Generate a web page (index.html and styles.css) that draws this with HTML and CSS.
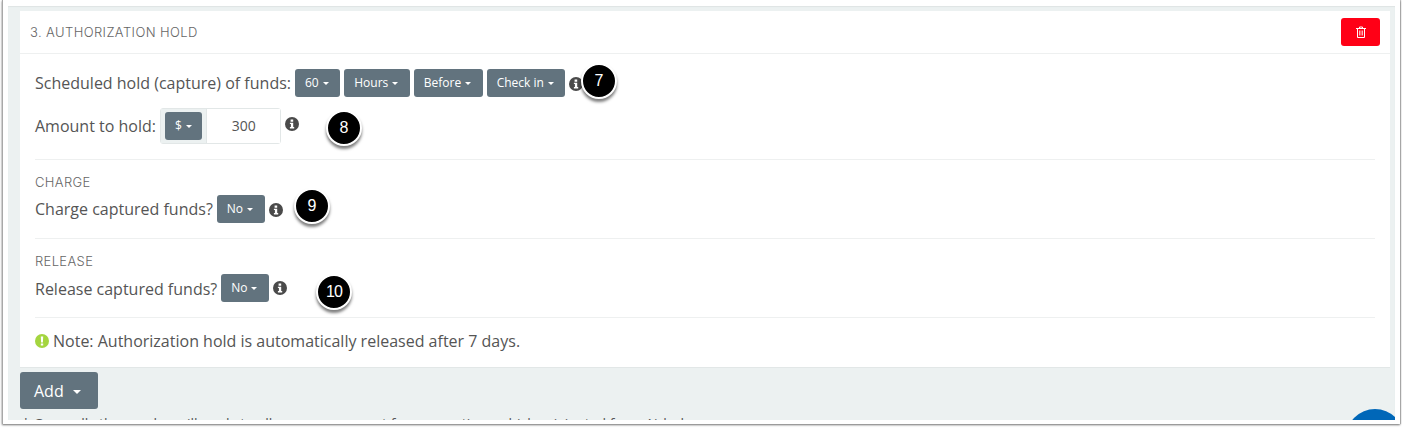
FILE: index.html
```html
<!DOCTYPE html>
<html lang="en">
  <head>
    <meta charset="UTF-8" />
    <meta name="viewport" content="width=device-width, initial-scale=1.0" />
    <title>Authorization hold</title>
    <link rel="stylesheet" href="styles.css">
  </head>
  <body>
    <div class="window">
      <div class="page">
        <div class="card">
          <div class="card-head">
            <span class="card-title">3. Authorization Hold</span>
            <button class="btn-delete" aria-label="Delete">
              <svg width="10" height="12" viewBox="0 0 10 12" fill="none" stroke="#fff" stroke-width="1">
                <path d="M0 2.5h10M3.5 2.5V1h3v1.5M1.5 2.5v9h7v-9" />
                <path d="M3.5 4.5v5M5 4.5v5M6.5 4.5v5" stroke-width="0.7" />
              </svg>
            </button>
          </div>
          <div class="card-body">
            <div class="row row-first">
              <span class="label">Scheduled hold (capture) of funds:</span>
              <button class="btn">60<i class="caret"></i></button>
              <button class="btn">Hours<i class="caret"></i></button>
              <button class="btn">Before<i class="caret"></i></button>
              <button class="btn">Check in<i class="caret"></i></button>
              <svg class="info info-low" viewBox="0 0 14 14"><circle cx="7" cy="7" r="7" fill="#4a4a4a" /><path d="M5.6 2.6h2.6v2.2H5.6zM4.9 5.7h3.3v4.4h1v1.4H4.9v-1.4h1V7.1h-1z" fill="#fff" /></svg>
            </div>
            <div class="row row-amount">
              <span class="label">Amount to hold:</span>
              <div class="input-group">
                <div class="addon">
                  <button class="btn">$<i class="caret"></i></button>
                </div>
                <span class="input">300</span>
              </div>
              <svg class="info info-high" viewBox="0 0 14 14"><circle cx="7" cy="7" r="7" fill="#4a4a4a" /><path d="M5.6 2.6h2.6v2.2H5.6zM4.9 5.7h3.3v4.4h1v1.4H4.9v-1.4h1V7.1h-1z" fill="#fff" /></svg>
            </div>
            <div class="section">
              <div class="section-title">Charge</div>
              <div class="row">
                <span class="label">Charge captured funds?</span>
                <button class="btn">No<i class="caret"></i></button>
                <svg class="info info-low" viewBox="0 0 14 14"><circle cx="7" cy="7" r="7" fill="#4a4a4a" /><path d="M5.6 2.6h2.6v2.2H5.6zM4.9 5.7h3.3v4.4h1v1.4H4.9v-1.4h1V7.1h-1z" fill="#fff" /></svg>
              </div>
            </div>
            <div class="section">
              <div class="section-title">Release</div>
              <div class="row">
                <span class="label label-low">Release captured funds?</span>
                <button class="btn">No<i class="caret"></i></button>
                <svg class="info" viewBox="0 0 14 14"><circle cx="7" cy="7" r="7" fill="#4a4a4a" /><path d="M5.6 2.6h2.6v2.2H5.6zM4.9 5.7h3.3v4.4h1v1.4H4.9v-1.4h1V7.1h-1z" fill="#fff" /></svg>
              </div>
            </div>
            <div class="note">
              <svg class="note-icon" viewBox="0 0 14 14"><circle cx="7" cy="7" r="7" fill="#a4d53f" /><path d="M5.8 2.4h2.4l-.3 6H6.100zM5.8 9.400h2.400v2.200H5.800z" fill="#fff" /></svg>
              <span>Note: Authorization hold is automatically released after 7 days.</span>
            </div>
          </div>
        </div>
        <button class="btn-add">Add<i class="caret"></i></button>
        <p class="footnote">* Generally the employ will apply to all resources except for reservations which originated from Airbnb</p>
      </div>

      <!-- callouts on top of the screenshot -->
      <span class="callout callout-7">7</span>
      <span class="callout callout-8">8</span>
      <span class="callout callout-9">9</span>
      <span class="callout callout-10">10</span>
      <span class="chat-bubble"></span>
    </div>
  </body>
</html>
```

FILE: styles.css
```css
html,
body {
  margin: 0;
  height: 100%;
  background: #fff;
  overflow: hidden;
}
body {
  font-family: "Open Sans", Arial, sans-serif;
  color: #555;
}
button {
  font-family: inherit;
  border: none;
  cursor: pointer;
}
.window {
  position: relative;
  width: 1398px;
  height: 424px;
  margin-left: 2px;
  box-sizing: border-box;
  padding: 6px 5px 4px 5px;
  background: #fff;
  border-left: 1px solid #a8a8a8;
  box-shadow: 0 1px 2px rgba(0, 0, 0, 0.55), 1px 0 1px rgba(0, 0, 0, 0.2), 0 -1px 1px rgba(0, 0, 0, 0.06);
  overflow: hidden;
}
.page {
  height: 414px;
  box-sizing: border-box;
  padding: 5px 5px 0 12px;
  background: #ecf1f1;
  box-shadow: inset 0 1px 1px #dfe4e4;
  overflow: hidden;
}
.card {
  background: #fff;
  border-bottom: 1px solid #e2e7e7;
}
.card-head {
  display: flex;
  justify-content: space-between;
  align-items: center;
  height: 42px;
  padding: 0 10px;
  border-bottom: 1px solid #eef0f0;
}
.card-title {
  font-family: Inter, "Open Sans", sans-serif;
  font-size: 13px;
  font-weight: 300;
  letter-spacing: 0.4px;
  color: #666;
  text-transform: uppercase;
}
.btn-delete {
  display: flex;
  align-items: center;
  justify-content: center;
  width: 39px;
  height: 28px;
  padding: 0;
  background: #ff0016;
  border-radius: 3px;
}
.card-body {
  padding: 15px 15px 0;
}
.row {
  display: flex;
  align-items: center;
  gap: 4px;
  height: 28px;
}
.label {
  font-size: 16px;
  color: #555;
}
.label-low {
  padding-top: 2px;
}
.btn {
  display: inline-flex;
  align-items: center;
  height: 28px;
  padding: 0 11.5px 2px 10px;
  font-size: 12px;
  color: #fff;
  background: #62737e;
  border-radius: 3px;
}
.caret {
  width: 0;
  height: 0;
  margin: 2px 0 0 4px;
  border-top: 3px solid #fff;
  border-left: 3px solid transparent;
  border-right: 3px solid transparent;
}
.info {
  width: 14px;
  height: 14px;
}
.info-low {
  margin-top: 2px;
}
.info-high {
  margin-bottom: 4px;
}
.row-amount {
  height: 36px;
  margin-top: 11px;
}
.input-group {
  display: flex;
  box-sizing: border-box;
  width: 121px;
  height: 36px;
  border: 1px solid #e2e7e7;
  border-radius: 3px;
}
.addon {
  display: flex;
  align-items: center;
  padding: 0 4px;
  background: #ecf1f1;
  border-right: 1px solid #e2e7e7;
}
.addon .btn {
  padding-right: 10.5px;
}
.input {
  flex: 1;
  font-size: 14px;
  line-height: 34px;
  text-align: center;
  color: #555;
  background: #fff;
}
.section {
  margin-top: 15px;
  padding-top: 15px;
  border-top: 1px solid #eef0f0;
}
.section-title {
  height: 20px;
  font-family: Inter, "Open Sans", sans-serif;
  font-size: 13px;
  font-weight: 300;
  letter-spacing: 0.35px;
  line-height: 14px;
  color: #666;
  text-transform: uppercase;
}
.note {
  display: flex;
  align-items: center;
  gap: 4px;
  height: 45px;
  margin-top: 15px;
  padding-bottom: 4px;
  border-top: 1px solid #eef0f0;
  font-size: 16px;
}
.note-icon {
  width: 14px;
  height: 14px;
}
.btn-add {
  display: flex;
  align-items: center;
  width: 78px;
  height: 37px;
  margin-top: 4px;
  padding: 0 14px;
  font-size: 16px;
  color: #fff;
  background: #62737e;
  border-radius: 3px;
}
.btn-add .caret {
  margin: 2px 0 0 9px;
  border-top-width: 4.5px;
  border-left-width: 4.5px;
  border-right-width: 4.5px;
}
.footnote {
  margin: 5px 0 0 2px;
  font-size: 14px;
  color: #555;
  white-space: nowrap;
}
.callout {
  position: absolute;
  display: flex;
  align-items: center;
  justify-content: center;
  box-sizing: border-box;
  width: 36px;
  height: 36px;
  padding-bottom: 1px;
  font-family: "Liberation Sans", Arial, sans-serif;
  font-size: 16px;
  color: #fff;
  background: #000;
  border: 2px solid #fff;
  border-radius: 50%;
  box-shadow: 0 3px 3px rgba(0, 0, 0, 0.5);
}
.callout-7 { left: 578px; top: 63px; }
.callout-8 { left: 323px; top: 110px; }
.callout-9 { left: 291px; top: 188px; }
.callout-10 { left: 313px; top: 274px; letter-spacing: -1px; }
.chat-bubble {
  position: absolute;
  left: 1343px;
  top: 409px;
  width: 58px;
  height: 58px;
  background: #0067b8;
  border-radius: 50%;
  clip-path: inset(0 9px 47px 0);
}
```
